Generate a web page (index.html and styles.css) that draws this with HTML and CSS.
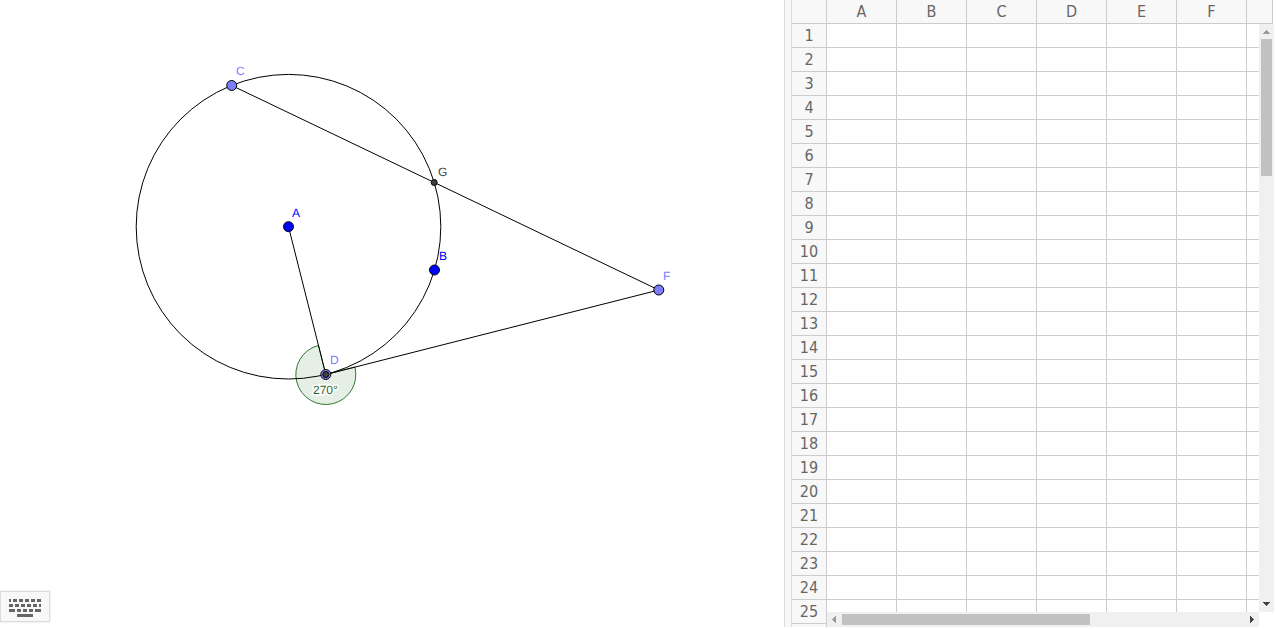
FILE: index.html
```html
<!DOCTYPE html>
<html lang="en">
<head>
<meta charset="utf-8">
<title>Geometry and Spreadsheet</title>
<link rel="stylesheet" href="styles.css">
</head>
<body>
<div class="app">
  <main class="graphics">
    <svg class="canvas" role="img" aria-label="Circle with tangent and secant">
      <path class="angle" d="M325.8 374.5L318.5 345.4A30 30 0 1 0 354.9 367.1Z"/>
      <circle class="line" cx="288.5" cy="226.7" r="152.3"/>
      <path class="line" d="M231.7 85.5L658.8 290M658.8 290L325.8 374.5M288.5 226.7L325.8 374.5"/>
      <circle class="point free" cx="288.5" cy="226.7" r="5"/>
      <circle class="point free" cx="434.5" cy="270" r="5"/>
      <circle class="point bound" cx="231.7" cy="85.5" r="5"/>
      <circle class="point bound" cx="658.8" cy="290" r="5"/>
      <circle class="point bound" cx="325.8" cy="374.5" r="5"/>
      <circle class="point fixed" cx="325.8" cy="374.5" r="3"/>
      <circle class="point fixed" cx="434.2" cy="182.5" r="3"/>
      <text class="label label-free" x="292" y="217">A</text>
      <text class="label label-free" x="439" y="260">B</text>
      <text class="label label-bound" x="236" y="75">C</text>
      <text class="label label-bound" x="330" y="364">D</text>
      <text class="label label-bound" x="663" y="280">F</text>
      <text class="label label-fixed" x="438" y="176">G</text>
      <text class="label label-angle" x="313" y="394">270°</text>
    </svg>
    <button class="keyboard" type="button" aria-label="Show keyboard">
      <svg width="32" height="18" viewBox="0 0 32 18" shape-rendering="crispEdges" fill="#666">
        <path d="M0 0h2v3H0zM4 0h4v3H4zM10 0h4v3h-4zM16 0h4v3h-4zM22 0h4v3h-4zM28 0h4v3h-4z"/>
        <path d="M0 5h4v3H0zM6 5h4v3H6zM12 5h4v3h-4zM18 5h4v3h-4zM24 5h4v3h-4zM30 5h2v3h-2z"/>
        <path d="M0 10h6v3H0zM8 10h4v3H8zM14 10h4v3h-4zM20 10h4v3h-4zM26 10h6v3h-6z"/>
        <path d="M8 15h16v3H8z"/>
      </svg>
    </button>
  </main>
  <div class="divider"></div>
  <section class="sheet" aria-label="Spreadsheet">
    <table class="grid">
      <thead>
        <tr><th class="corner"></th><th class="col">A</th><th class="col">B</th><th class="col">C</th><th class="col">D</th><th class="col">E</th><th class="col">F</th><th></th></tr>
      </thead>
      <tbody id="rows"></tbody>
    </table>
    <div class="bar bar-y">
      <svg class="arrow" viewBox="0 0 15 15" shape-rendering="crispEdges"><path fill="#989898" d="M7 6h1v1h1v1h1v1h1v1H4V9h1V8h1V7h1z"/></svg>
      <div class="track"><div class="thumb"></div></div>
      <svg class="arrow" viewBox="0 0 15 15" shape-rendering="crispEdges"><path fill="#444" d="M4 5h7v1h-1v1H9v1H8v1H7V8H6V7H5V6H4z"/></svg>
    </div>
    <div class="bar bar-x">
      <svg class="arrow" viewBox="0 0 15 15" shape-rendering="crispEdges"><path fill="#989898" d="M9 4v7H8v-1H7V9H6V8H5V7h1V6h1V5h1V4z"/></svg>
      <div class="track"><div class="thumb"></div></div>
      <svg class="arrow" viewBox="0 0 15 15" shape-rendering="crispEdges"><path fill="#444" d="M6 4h1v1h1v1h1v1h1v1H9v1H8v1H7v1H6z"/></svg>
    </div>
    <div class="bar-corner"></div>
  </section>
</div>
<script src="sheet.js"></script>
</body>
</html>
```

FILE: styles.css
```css
* {
  box-sizing: border-box;
}

body {
  margin: 0;
  background: #fff;
  overflow: hidden;
}

.app {
  display: flex;
  height: 100vh;
  padding: 0 2px 2px 0;
}

.graphics {
  position: relative;
  flex: 1;
  min-width: 0;
}

.canvas {
  display: block;
  width: 100%;
  height: 100%;
}

.line {
  fill: none;
  stroke: #000;
  stroke-width: 1;
}

.angle {
  fill: #e6efe6;
  stroke: #2f772f;
  stroke-width: 1;
}

.point {
  stroke: #000;
  stroke-width: 1;
}

.free {
  fill: #00f;
}

.bound {
  fill: #7d7dff;
}

.fixed {
  fill: #404040;
}

.label {
  font: 12px "Liberation Sans", Arial, sans-serif;
  text-rendering: geometricPrecision;
}

.label-free {
  fill: #00f;
}

.label-bound {
  fill: #7d7dff;
}

.label-fixed {
  fill: #404040;
}

.label-angle {
  fill: #1f641f;
  stroke: #fff;
  stroke-width: 3px;
  paint-order: stroke;
}

.keyboard {
  position: absolute;
  left: 0;
  bottom: 5px;
  display: flex;
  align-items: flex-start;
  justify-content: center;
  width: 50px;
  height: 31px;
  padding: 7px 0 0;
  border: 1px solid #dcdcdc;
  background: #f8f8f8;
  box-shadow: 0 0 2px rgba(0, 0, 0, 0.15);
}

.divider {
  width: 8px;
  border: solid #dcdcdc;
  border-width: 0 1px;
  background: #f8f8f8;
}

.sheet {
  position: relative;
  width: 482px;
  overflow: hidden;
}

.grid {
  width: calc(100% - 1px);
  table-layout: fixed;
  border-spacing: 0;
  color: #666;
  font: 16px/23px "DejaVu Sans Condensed", "DejaVu Sans", sans-serif;
}

.grid th,
.grid td {
  height: 24px;
  padding: 0;
  border: solid #ccc;
  border-width: 0 1px 1px 0;
  font-weight: normal;
  text-align: center;
}

.grid th {
  background: #f8f8f8;
}

.corner {
  width: 35px;
}

.col {
  width: 70px;
}

.bar {
  position: absolute;
  display: flex;
  background: #f0f0f0;
}

.bar-y {
  top: 24px;
  right: 0;
  bottom: 15px;
  flex-direction: column;
  width: 15px;
}

.bar-x {
  left: 35px;
  right: 15px;
  bottom: 0;
  height: 15px;
}

.bar-corner {
  position: absolute;
  right: 0;
  bottom: 0;
  width: 15px;
  height: 15px;
  background: #fff;
}

.arrow {
  flex: none;
  width: 15px;
  height: 15px;
}

.track {
  flex: 1;
  padding: 0 2px;
}

.bar-x .track {
  padding: 2px 0;
}

.thumb {
  height: 137px;
  background: #c1c1c1;
}

.bar-x .thumb {
  width: 248px;
  height: 100%;
}
```

FILE: sheet.js
```javascript
const ROWS = 25;
const body = document.getElementById("rows");

// One unnumbered row follows the last one, to fill the bottom edge.
for (let n = 1; n <= ROWS + 1; n++) {
  const row = body.insertRow();
  const head = document.createElement("th");
  if (n <= ROWS) head.textContent = n;
  row.append(head);
  for (let c = 0; c < 7; c++) row.insertCell();
}
```
